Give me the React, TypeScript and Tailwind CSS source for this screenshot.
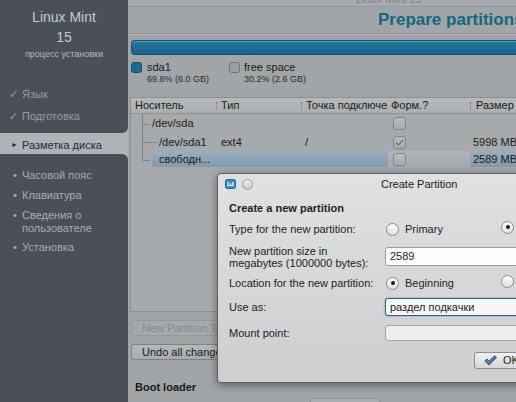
import React from 'react';

const font = "font-['Liberation_Sans',Arial,sans-serif]";

function Radio({ checked }: { checked?: boolean }) {
  return (
    <span className="flex h-[13px] w-[13px] shrink-0 items-center justify-center rounded-full border border-[#8a8c8e] bg-gradient-to-b from-[#fdfdfd] to-[#e0e0e0]">
      {checked && <span className="h-[4px] w-[4px] rounded-full bg-[#1c1c1c]" />}
    </span>
  );
}

function Box({ checked }: { checked?: boolean }) {
  return (
    <span className="flex h-[13px] w-[13px] items-center justify-center rounded-[3px] border border-[#80858a] bg-gradient-to-b from-[#b8bcbf] to-[#a7abae]">
      {checked && (
        <svg width="9" height="7" viewBox="0 0 9 7">
          <path d="M1 3.5L3.5 6L8 1" fill="none" stroke="#6a6f73" strokeWidth="1.2" />
        </svg>
      )}
    </span>
  );
}

function Tree({ w, last }: { w: number; last?: boolean }) {
  return (
    <svg width={w} height="18" className="shrink-0">
      <path d={`M0.5 0V${last ? 9 : 18}M0.5 9.5H${w - 2}`} stroke="#808488" strokeWidth="1" fill="none" />
    </svg>
  );
}

const sel = 'bg-gradient-to-b from-[#9aaebf] to-[#8399ac]';
const cols = 'grid grid-cols-[85px_85px_87px_82px_80px] whitespace-nowrap';

export default function App() {
  return (
    <div className={`relative flex h-[402px] w-[516px] overflow-hidden text-[11px] ${font}`}>
      {/* sidebar */}
      <aside className="flex w-[128px] shrink-0 flex-col bg-[#b0b3b5]">
        <div className="h-[133px] shrink-0 rounded-br-[6px] bg-[#4a5056] pt-[8px]">
          <div className="text-center text-[14px] leading-[18px] text-[#c3cad0]">Linux Mint</div>
          <div className="mt-[2px] text-center text-[14px] leading-[18px] text-[#c3cad0]">15</div>
          <div className="mt-[2px] text-center text-[9px] leading-[12px] text-[#b3bac0]">процесс установки</div>
          <div className="mt-[26px] flex h-[16px] items-center pl-[9px] text-[#969ca1]">
            <span className="w-[13px]">✓</span>Язык
          </div>
          <div className="mt-[6px] flex h-[16px] items-center pl-[9px] text-[#969ca1]">
            <span className="w-[13px]">✓</span>Подготовка
          </div>
        </div>
        <div className="flex h-[21px] shrink-0 items-center pl-[11px] pt-[3px] text-[#1d2a34]">
          <span className="w-[11px] text-[7px]">►</span>Разметка диска
        </div>
        <div className="flex-1 rounded-tr-[6px] bg-[#4a5056] pt-[13px] text-[#a7adb1]">
          <div className="flex h-[16px] items-center pl-[13px]">
            <span className="w-[9px]">•</span>Часовой пояс
          </div>
          <div className="mt-[4px] flex h-[16px] items-center pl-[13px]">
            <span className="w-[9px]">•</span>Клавиатура
          </div>
          <div className="mt-[6px] flex pl-[13px] leading-[13px]">
            <span className="w-[9px]">•</span>
            <span>
              Сведения о<br />пользователе
            </span>
          </div>
          <div className="mt-[4px] flex h-[16px] items-center pl-[13px]">
            <span className="w-[9px]">•</span>Установка
          </div>
        </div>
      </aside>

      {/* main */}
      <main className="flex min-w-0 flex-1 flex-col bg-[#a1a5a8] text-[#1a1a1a]">
        <div className="h-[7px] shrink-0 overflow-hidden border-b border-[#93979a] bg-[#a7abad]">
          <p className="-mt-[7px] pl-[228px] text-[11px] leading-[13px] text-[#7d8185]">Linux Mint 15</p>
        </div>
        <div className="h-[26px] shrink-0 whitespace-nowrap pl-[250px] text-[17px] font-bold leading-[26px] text-[#0e6b7f]">
          Prepare partitions
        </div>
        <div className="h-[2px] shrink-0 border-t border-b border-t-[#92969a] border-b-[#b3b7ba]" />
        <div className="ml-[3px] mt-[5px] h-[15px] shrink-0 rounded-l-[4px] border border-r-0 border-[#125270] bg-gradient-to-b from-[#2677a0] to-[#17658b] shadow-[inset_0_1px_0_rgba(255,255,255,0.25)]" />

        <div className="ml-[3px] mt-[6px] flex">
          <div className="flex w-[98px] gap-[5px]">
            <span className="mt-[1px] h-[11px] w-[11px] rounded-[3px] border border-[#164f69] bg-[#1c6a8e]" />
            <div>
              <div className="leading-[12px]">sda1</div>
              <div className="text-[9px] leading-[12px] text-[#2a2a2a]">69.8% (6.0 GB)</div>
            </div>
          </div>
          <div className="flex gap-[4px]">
            <span className="mt-[1px] h-[11px] w-[11px] rounded-[3px] border border-[#707478] bg-[#9b9fa2]" />
            <div>
              <div className="leading-[12px]">free space</div>
              <div className="text-[9px] leading-[12px] text-[#2a2a2a]">30.2% (2.6 GB)</div>
            </div>
          </div>
        </div>

        {/* table */}
        <div className="ml-[2px] mt-[12px] h-[215px] shrink-0 overflow-hidden border border-r-0 border-[#8b8f92] bg-[#a6aaad]">
          <div className={`${cols} h-[16px] border-b border-[#8e9295] bg-gradient-to-b from-[#b5b9bb] to-[#abafb2] leading-[15px]`}>
            <div className="pl-[4px]">Носитель</div>
            <div className="flex items-center">
              <span className="h-[8px] border-l border-dotted border-[#6f7376]" />
              <span className="pl-[4px]">Тип</span>
            </div>
            <div className="flex items-center overflow-hidden">
              <span className="h-[8px] border-l border-dotted border-[#6f7376]" />
              <span className="pl-[4px]">Точка подключения</span>
            </div>
            <div className="pl-[3px]">Форм.?</div>
            <div className="flex items-center">
              <span className="h-[8px] border-l border-dotted border-[#6f7376]" />
              <span className="pl-[5px]">Размер</span>
            </div>
          </div>

          <div className={`${cols} h-[19px] items-center`}>
            <div className="flex h-full items-center pl-[11px]">
              <svg width="10" height="19" className="shrink-0">
                <path d="M0.5 0V19M0.5 10.5H8" stroke="#808488" fill="none" />
              </svg>
              <span>/dev/sda</span>
            </div>
            <div />
            <div />
            <div className="pl-[5px]">
              <Box />
            </div>
            <div />
          </div>

          <div className={`${cols} h-[18px] items-center`}>
            <div className="flex h-full items-center pl-[11px]">
              <Tree w={17} />
              <span>/dev/sda1</span>
            </div>
            <div className="pl-[5px]">ext4</div>
            <div className="pl-[4px]">/</div>
            <div className="pl-[5px]">
              <Box checked />
            </div>
            <div className="pl-[3px]">5998 MB</div>
          </div>

          <div className={`${cols} h-[17px] items-stretch`}>
            <div className="flex items-start pl-[11px]">
              <Tree w={10} last />
              <div className={`flex h-[16px] flex-1 items-center rounded-l-[2px] pl-[7px] ${sel}`}>свободн...</div>
            </div>
            <div className={`h-[16px] ${sel}`} />
            <div className={`h-[16px] ${sel}`} />
            <div className="flex h-[16px] items-center bg-gradient-to-b from-[#b0b5b9] to-[#a3a9ae] pl-[5px]">
              <Box />
            </div>
            <div className={`flex h-[16px] items-center pl-[3px] ${sel}`}>2589 MB</div>
          </div>
        </div>

        <div className="ml-[3px] mt-[8px] flex h-[16px] w-[150px] shrink-0 items-center whitespace-nowrap rounded-[3px] border border-[#94989b] bg-[#a5a9ac] pl-[10px] text-[#85898c]">
          New Partition Table...
        </div>
        <div className="ml-[3px] mt-[8px] flex h-[16px] w-[150px] shrink-0 items-center whitespace-nowrap rounded-[3px] border border-[#7e8285] bg-gradient-to-b from-[#b4b8ba] to-[#a9adb0] pl-[10px]">
          Undo all changes
        </div>
        <div className="ml-[7px] mt-[20px] h-[14px] shrink-0 font-bold leading-[14px]">Boot loader</div>
        <div className="ml-[182px] mt-[4px] h-[10px] w-[70px] shrink-0 rounded-t-[3px] border border-[#8d9194] bg-[#a9adb0]" />
      </main>

      {/* dialog */}
      <div className="absolute left-[217px] top-[173px] h-[210px] w-[320px] rounded-[4px] border border-[#5f6366] bg-gradient-to-b from-[#e0e1e1] to-[#cdcecf] text-[#1e1e1e] shadow-[0_2px_8px_rgba(0,0,0,0.45)]">
        <div className="flex h-[20px] items-center pl-[7px]">
          <svg width="11" height="10" viewBox="0 0 11 10" className="shrink-0">
            <rect x="0.5" y="0.5" width="10" height="9" rx="2" fill="#3a8fd2" stroke="#1f5f92" />
            <path d="M3 3V6.5H8V3M5.5 4.5V6.5" stroke="#fff" strokeWidth="1.1" fill="none" />
          </svg>
          <span className="ml-[6px] h-[11px] w-[11px] shrink-0 rounded-full border border-[#9a9c9e] bg-gradient-to-b from-[#f2f2f2] to-[#c8c9ca]" />
          <span className="ml-[128px] whitespace-nowrap text-[#202020]">Create Partition</span>
        </div>

        <div className="pl-[11px]">
          <div className="mt-[5px] flex h-[18px] items-center font-bold">Create a new partition</div>

          <div className="mt-[3px] flex h-[18px] items-center">
            <span className="w-[156px] shrink-0">Type for the new partition:</span>
            <div className="flex pl-[1px]">
              <div className="flex w-[115px] items-center gap-[6px]">
                <Radio />
                <span>Primary</span>
              </div>
              <Radio checked />
            </div>
          </div>

          <div className="mt-[8px] flex h-[21px] items-center">
            <span className="w-[156px] shrink-0 leading-[12px]">
              New partition size in
              <br />
              megabytes (1000000 bytes):
            </span>
            <div className="flex h-[19px] w-[200px] items-center rounded-[3px] border border-[#9a9c9e] bg-[#fcfcfc] pl-[4px]">2589</div>
          </div>

          <div className="mt-[7px] flex h-[18px] items-center">
            <span className="w-[156px] shrink-0">Location for the new partition:</span>
            <div className="flex pl-[1px]">
              <div className="flex w-[115px] items-center gap-[6px]">
                <Radio checked />
                <span>Beginning</span>
              </div>
              <Radio />
            </div>
          </div>

          <div className="mt-[6px] flex h-[18px] items-center">
            <span className="w-[156px] shrink-0">Use as:</span>
            <div className="flex h-[18px] w-[200px] items-center rounded-[3px] border border-[#2f5f8f] bg-[#f6f6f6] pl-[4px] shadow-[0_0_2px_#5a9ad0]">
              раздел подкачки
            </div>
          </div>

          <div className="mt-[9px] flex h-[16px] items-center">
            <span className="w-[156px] shrink-0">Mount point:</span>
            <div className="h-[16px] w-[200px] rounded-[3px] border border-[#a4a6a8] bg-[#eef0f0]" />
          </div>

          <div className="ml-[245px] mt-[11px] flex h-[17px] w-[70px] items-center rounded-[3px] border border-[#8c8e90] bg-gradient-to-b from-[#f0f0f0] to-[#d6d6d6] pl-[9px]">
            <svg width="13" height="11" viewBox="0 0 13 11" className="shrink-0">
              <path d="M0.8 6L3 4L5 6.3L10.6 0.8L12.4 2.6L5 10Z" fill="#4f88b3" stroke="#1f3f58" strokeWidth="0.9" strokeLinejoin="round" />
            </svg>
            <span className="ml-[6px]">OK</span>
          </div>
        </div>
      </div>
    </div>
  );
}
